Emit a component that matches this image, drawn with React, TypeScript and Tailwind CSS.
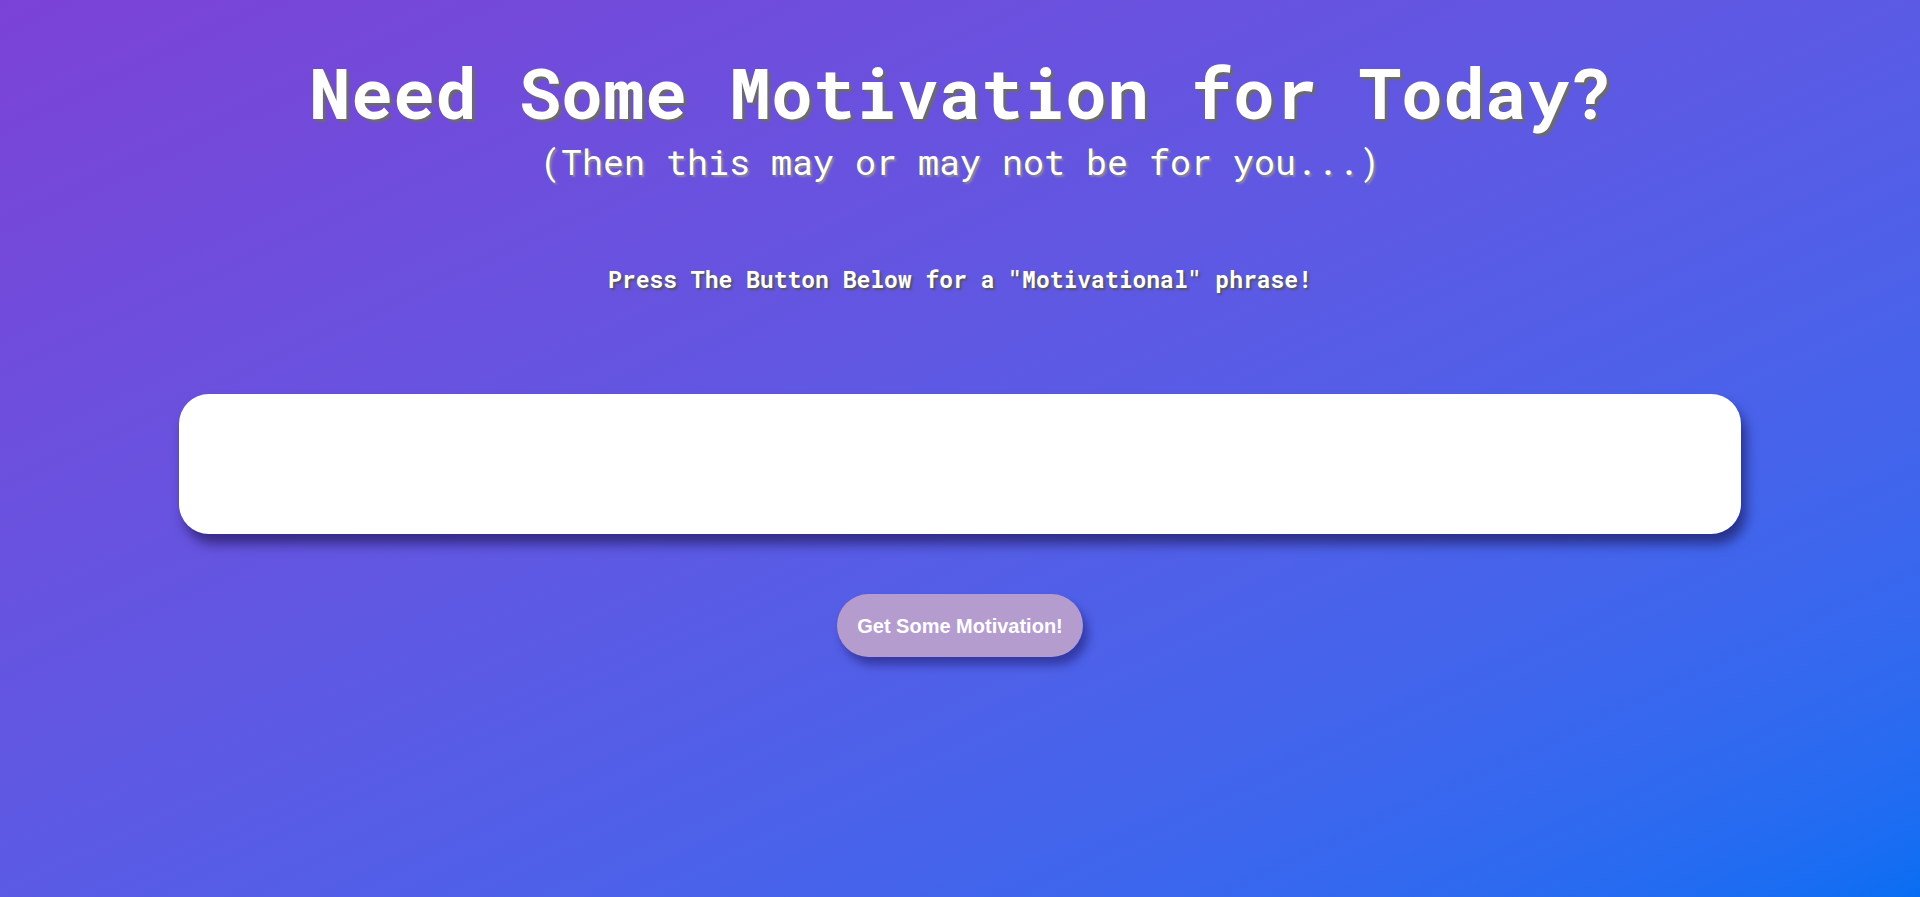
export default function App() {
  return (
    <div className="min-h-[897px] w-full bg-linear-to-br from-[#7b42d6] to-[#066ef3] text-white font-['Roboto_Mono','Liberation_Mono','DejaVu_Sans_Mono',monospace]">
      <div className="pt-[50px] text-center">
        <h1 className="text-[70px] font-bold leading-[84px] [text-shadow:3px_3px_2px_#6b6b6b]">
          Need Some Motivation for Today?
        </h1>
        <h2 className="mt-[6px] text-[35px] leading-[42px] [text-shadow:2px_2px_2px_#8a8a8a]">
          (Then this may or may not be for you...)
        </h2>
        <p className="mt-[83px] text-[23px] font-bold leading-[28px] [text-shadow:2px_2px_2px_#555]">
          Press The Button Below for a "Motivational" phrase!
        </p>
      </div>
      <div className="mx-auto mt-[101px] h-[140px] w-[1562px] rounded-[30px] bg-white shadow-[5px_10px_12px_rgba(20,10,60,0.55)]"></div>
      <div className="mt-[60px] flex justify-center">
        <button className="h-[63px] w-[246px] rounded-full bg-[#b59ccf] font-['Liberation_Sans',Arial,sans-serif] text-[20px] font-bold text-white shadow-[5px_8px_10px_rgba(20,10,80,0.45)]">
          Get Some Motivation!
        </button>
      </div>
    </div>
  );
}
